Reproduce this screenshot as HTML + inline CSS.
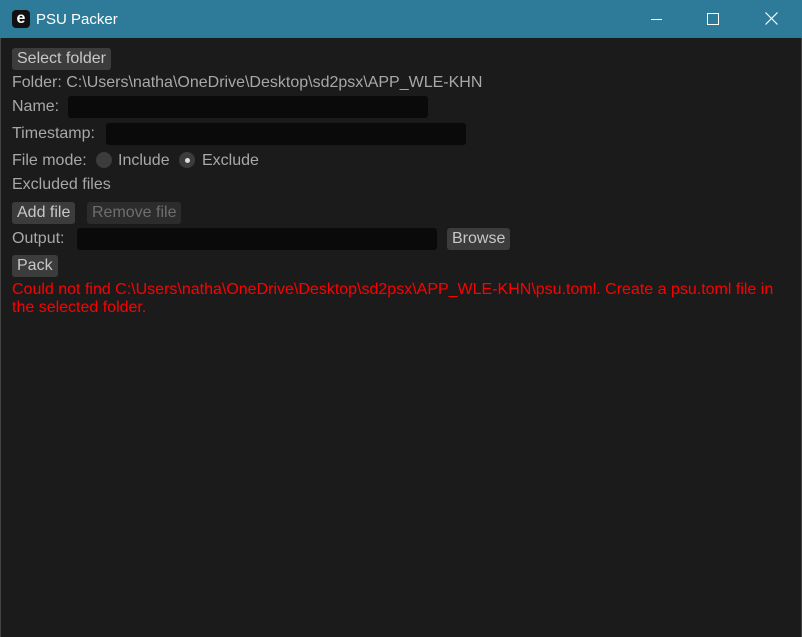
<!DOCTYPE html>
<html><head><style>
body{margin:0;width:802px;height:637px;background:#1b1b1b;font-family:"Liberation Sans","DejaVu Sans",sans-serif;font-size:16px;color:#a8a8a8;position:relative;overflow:hidden}
.tb{position:absolute;left:0;top:0;width:802px;height:38px;background:#2d7b99;color:#fff}
.a{position:absolute;white-space:nowrap}
.btn{position:absolute;background:#3c3c3c;border-radius:3px;height:22px;line-height:22px;padding:0 5px;color:#c8c8c8}
.inp{position:absolute;background:#0a0a0a;border-radius:3px;height:22px}
.rd{position:absolute;width:16px;height:16px;border-radius:50%;background:#3c3c3c}
.err{color:#ff0000}
</style></head><body>
<div style="position:absolute;left:0;top:38px;width:1px;height:599px;background:#444"></div>
<div style="position:absolute;right:0;top:38px;width:1px;height:599px;background:#444"></div>
<div class="tb">
<div class="a" style="left:12px;top:10px;width:18px;height:18px;background:#111;border-radius:4px;color:#fff;font-size:16px;line-height:17px;text-align:center;font-weight:bold">e</div>
<div class="a" style="left:36px;top:11px;font-size:15px">PSU Packer</div>
<div class="a" style="left:651px;top:19px;width:11px;height:1px;background:#fff"></div>
<div class="a" style="left:707px;top:13px;width:10px;height:10px;border:1px solid #fff"></div>
<svg class="a" style="left:765px;top:12px" width="13" height="13"><path d="M0.5 0.5L12.5 12.5M12.5 0.5L0.5 12.5" stroke="#fff" stroke-width="1.2"/></svg>
</div>
<div class="btn" style="left:12px;top:48px">Select folder</div>
<div class="a" style="left:12px;top:74px">Folder: C:\Users\natha\OneDrive\Desktop\sd2psx\APP_WLE-KHN</div>
<div class="a" style="left:12px;top:98px">Name:</div>
<div class="inp" style="left:68px;top:96px;width:360px"></div>
<div class="a" style="left:12px;top:125px">Timestamp:</div>
<div class="inp" style="left:106px;top:123px;width:360px"></div>
<div class="a" style="left:12px;top:152px">File mode:</div>
<div class="rd" style="left:96px;top:152px"></div>
<div class="a" style="left:118px;top:152px">Include</div>
<div class="rd" style="left:179px;top:152px"></div>
<div class="a" style="left:185px;top:158px;width:5px;height:5px;border-radius:50%;background:#ddd"></div>
<div class="a" style="left:202px;top:152px">Exclude</div>
<div class="a" style="left:12px;top:176px">Excluded files</div>
<div class="btn" style="left:12px;top:202px">Add file</div>
<div class="btn" style="left:87px;top:202px;background:#2c2c2c;color:#6e6e6e">Remove file</div>
<div class="a" style="left:12px;top:230px">Output:</div>
<div class="inp" style="left:77px;top:228px;width:360px"></div>
<div class="btn" style="left:447px;top:228px">Browse</div>
<div class="btn" style="left:12px;top:255px">Pack</div>
<div class="a err" style="left:12px;top:281px">Could not find C:\Users\natha\OneDrive\Desktop\sd2psx\APP_WLE-KHN\psu.toml. Create a psu.toml file in</div>
<div class="a err" style="left:12px;top:299px">the selected folder.</div>
</body></html>
